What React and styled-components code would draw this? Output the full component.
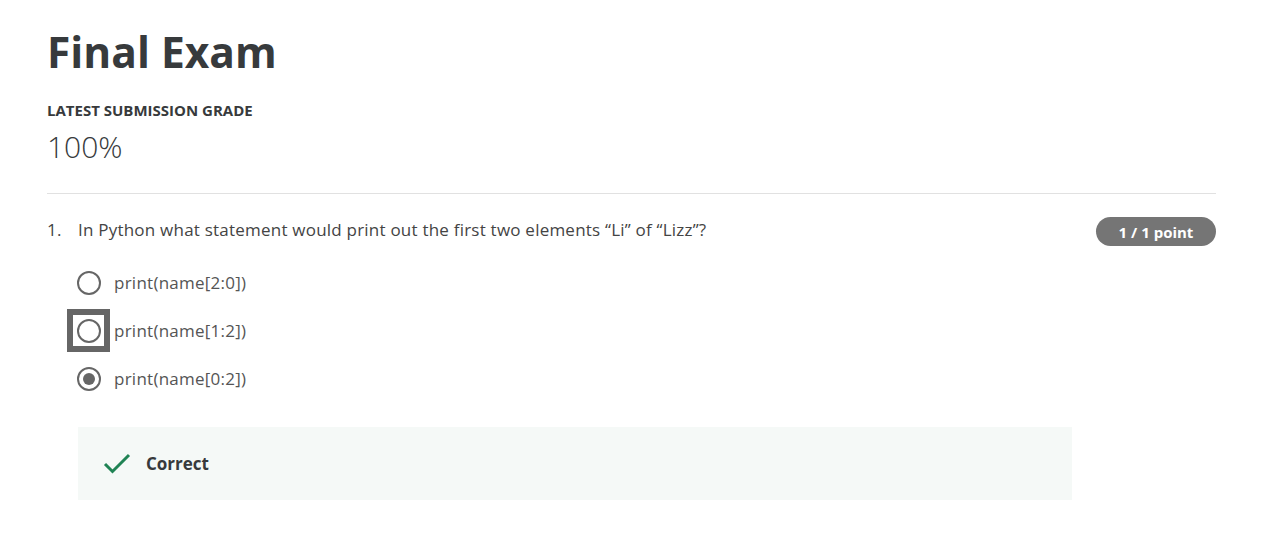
import React from "react";
import styled, { createGlobalStyle } from "styled-components";

const options = [
  { id: 1, label: "print(name[2:0])", checked: false, focused: false },
  { id: 2, label: "print(name[1:2])", checked: false, focused: true },
  { id: 3, label: "print(name[0:2])", checked: true, focused: false },
];

const App = () => {
  return (
    <>
      <GlobalStyle />
      <Page>
        <Title>Final Exam</Title>
        <GradeLabel>LATEST SUBMISSION GRADE</GradeLabel>
        <Grade>100%</Grade>
        <Divider />
        <QuestionRow>
          <QuestionText>
            <Number>1.</Number>
            <span>In Python what statement would print out the first two elements “Li” of “Lizz”?</span>
          </QuestionText>
          <Points>1 / 1 point</Points>
        </QuestionRow>
        <OptionList>
          {options.map((o) => (
            <Option key={o.id}>
              <FocusRing $focused={o.focused}>
                <Radio $checked={o.checked} />
              </FocusRing>
              <OptionLabel>{o.label}</OptionLabel>
            </Option>
          ))}
        </OptionList>
        <Feedback>
          <svg width="28" height="22" viewBox="0 0 28 22">
            <path d="M2 11 L9.5 18.5 L26 2" fill="none" stroke="#1f8354" strokeWidth="3" />
          </svg>
          <FeedbackText>Correct</FeedbackText>
        </Feedback>
      </Page>
    </>
  );
};

export default App;

const GlobalStyle = createGlobalStyle`
  body {
    margin: 0;
    background: #ffffff;
    font-family: "Open Sans", "Noto Sans", sans-serif;
    color: #373a3c;
  }
`;

const Page = styled.div`
  width: 1169px;
  padding: 25px 0 0 47px;
`;

const Title = styled.h1`
  margin: 0;
  font-size: 42.5px;
  font-weight: 700;
  line-height: 54px;
  color: #373a3c;
`;

const GradeLabel = styled.div`
  margin-top: 20px;
  font-size: 15px;
  font-weight: 700;
  line-height: 22px;
  color: #373a3c;
`;

const Grade = styled.div`
  margin-top: 8px;
  font-size: 30px;
  font-weight: 300;
  line-height: 36px;
  color: #373a3c;
`;

const Divider = styled.hr`
  margin: 28px 0 0;
  border: none;
  border-top: 1px solid #e1e1e1;
`;

const QuestionRow = styled.div`
  display: flex;
  justify-content: space-between;
  align-items: flex-start;
  margin-top: 23px;
`;

const QuestionText = styled.div`
  display: flex;
  font-size: 17px;
  letter-spacing: 0.22px;
  line-height: 26px;
  color: #444444;
`;

const Number = styled.span`
  width: 31px;
`;

const Points = styled.div`
  width: 120px;
  height: 29px;
  border-radius: 15px;
  background: #757575;
  color: #ffffff;
  font-size: 15px;
  font-weight: 700;
  display: flex;
  align-items: center;
  justify-content: center;
`;

const OptionList = styled.div`
  display: flex;
  flex-direction: column;
  gap: 5px;
  margin-top: 15px;
  margin-left: 20px;
`;

const Option = styled.div`
  display: flex;
  align-items: center;
  height: 43px;
`;

const FocusRing = styled.div`
  width: 43px;
  height: 43px;
  box-sizing: border-box;
  border: 6px solid ${(p) => (p.$focused ? "#666666" : "transparent")};
  display: flex;
  align-items: center;
  justify-content: center;
`;

const Radio = styled.div`
  width: 24px;
  height: 24px;
  box-sizing: border-box;
  border-radius: 50%;
  border: 2px solid #666666;
  display: flex;
  align-items: center;
  justify-content: center;
  &::after {
    content: "";
    display: ${(p) => (p.$checked ? "block" : "none")};
    width: 12px;
    height: 12px;
    border-radius: 50%;
    background: #666666;
  }
`;

const OptionLabel = styled.span`
  margin-left: 4px;
  font-size: 17px;
  letter-spacing: 0.25px;
  color: #555555;
`;

const Feedback = styled.div`
  margin: 27px 0 0 31px;
  width: 994px;
  height: 73px;
  box-sizing: border-box;
  background: #f5f9f7;
  display: flex;
  align-items: center;
  gap: 15px;
  padding-left: 25px;
`;

const FeedbackText = styled.span`
  font-size: 17px;
  font-weight: 700;
  color: #373a3c;
`;
